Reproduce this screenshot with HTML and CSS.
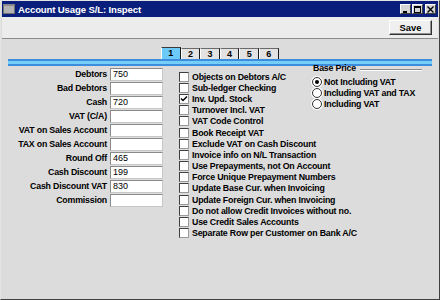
FILE: index.html
```html
<!DOCTYPE html>
<html lang="en">
  <head>
    <meta charset="UTF-8" />
    <title>Account Usage S/L: Inspect</title>
    <link rel="stylesheet" href="styles.css">
  </head>
  <body>
    <div class="window">
      <div class="titlebar">
        <span class="app-icon"></span>
        <span class="title">Account Usage S/L: Inspect</span>
        <div class="win-btns">
          <span class="wbtn">
            <svg width="9" height="7" viewBox="0 0 9 7"><rect x="2" y="5" width="4" height="2" fill="#000"/></svg>
          </span>
          <span class="wbtn">
            <svg width="9" height="7" viewBox="0 0 9 7"><rect x="1.5" y="0.5" width="6" height="6" fill="none" stroke="#000"/><rect x="1" y="0" width="7" height="2" fill="#000"/></svg>
          </span>
          <span class="wbtn close">
            <svg width="9" height="7" viewBox="0 0 9 7"><path d="M1.5 0.5 L7.5 6.5 M7.5 0.5 L1.5 6.5" stroke="#000" stroke-width="1.4"/></svg>
          </span>
        </div>
      </div>

      <div class="toolbar">
        <button class="save">Save</button>
      </div>

      <div class="content">
        <div class="tabs">
          <span class="tab active">1</span>
          <span class="tab">2</span>
          <span class="tab">3</span>
          <span class="tab">4</span>
          <span class="tab">5</span>
          <span class="tab">6</span>
        </div>
        <div class="tabbar"></div>

        <div class="form">
          <!-- account fields -->
          <div class="fields">
            <div class="field"><label>Debtors</label><span class="input">750</span></div>
            <div class="field"><label>Bad Debtors</label><span class="input"></span></div>
            <div class="field"><label>Cash</label><span class="input">720</span></div>
            <div class="field"><label>VAT (C/A)</label><span class="input"></span></div>
            <div class="field"><label>VAT on Sales Account</label><span class="input"></span></div>
            <div class="field"><label>TAX on Sales Account</label><span class="input"></span></div>
            <div class="field"><label>Round Off</label><span class="input">465</span></div>
            <div class="field"><label>Cash Discount</label><span class="input">199</span></div>
            <div class="field"><label>Cash Discount VAT</label><span class="input">830</span></div>
            <div class="field"><label>Commission</label><span class="input"></span></div>
          </div>

          <!-- options -->
          <div class="checks">
            <div class="check"><span class="box"></span>Objects on Debtors A/C</div>
            <div class="check"><span class="box"></span>Sub-ledger Checking</div>
            <div class="check"><span class="box">
              <svg width="8" height="8" viewBox="0 0 8 8"><path d="M1 3.5 L3 5.5 L7 1.5" fill="none" stroke="#000" stroke-width="1.5"/></svg>
            </span>Inv. Upd. Stock</div>
            <div class="check"><span class="box"></span>Turnover Incl. VAT</div>
            <div class="check"><span class="box"></span>VAT Code Control</div>
            <div class="check"><span class="box"></span>Book Receipt VAT</div>
            <div class="check"><span class="box"></span>Exclude VAT on Cash Discount</div>
            <div class="check"><span class="box"></span>Invoice info on N/L Transaction</div>
            <div class="check"><span class="box"></span>Use Prepayments, not On Account</div>
            <div class="check"><span class="box"></span>Force Unique Prepayment Numbers</div>
            <div class="check"><span class="box"></span>Update Base Cur. when Invoicing</div>
            <div class="check"><span class="box"></span>Update Foreign Cur. when Invoicing</div>
            <div class="check"><span class="box"></span>Do not allow Credit Invoices without no.</div>
            <div class="check"><span class="box"></span>Use Credit Sales Accounts</div>
            <div class="check"><span class="box"></span>Separate Row per Customer on Bank A/C</div>
          </div>

          <!-- base price group -->
          <div class="baseprice">
            <div class="legend"><span>Base Price</span><span class="rule"></span></div>
            <div class="radios">
              <div class="radio"><span class="dot on"></span>Not Including VAT</div>
              <div class="radio"><span class="dot"></span>Including VAT and TAX</div>
              <div class="radio"><span class="dot"></span>Including VAT</div>
            </div>
          </div>
        </div>
      </div>
    </div>
  </body>
</html>
```

FILE: styles.css
```css
body {
  margin: 0;
  font-family: "Liberation Sans", Arial, sans-serif;
}
.window {
  width: 440px;
  height: 300px;
  box-sizing: border-box;
  border: 1px solid;
  border-color: #e4e4e4 #404040 #404040 #e4e4e4;
  padding: 0 1px 1px 1px;
  background: #dcdcdc;
  display: flex;
  flex-direction: column;
}

/* title bar */
.titlebar {
  height: 16px;
  background: #0a1f7c;
  display: flex;
  align-items: center;
  padding-left: 1px;
}
.app-icon {
  width: 10px;
  height: 7px;
  background: #b4b4b4;
  border: 1px solid #707070;
  border-top: 2px solid #8a8a8a;
  margin-right: 3px;
}
.title {
  color: #fff;
  font-weight: bold;
  font-size: 9.6px;
  letter-spacing: -0.15px;
}
.win-btns {
  margin-left: auto;
  margin-right: 2px;
  display: flex;
  gap: 1px;
}
.wbtn {
  width: 11px;
  height: 10px;
  box-sizing: border-box;
  background: #d4d4d4;
  border: 1px solid;
  border-color: #fff #404040 #404040 #fff;
  display: flex;
  align-items: center;
  justify-content: center;
}
.wbtn.close {
  margin-left: 1px;
}

/* toolbar */
.toolbar {
  height: 21px;
  background: #ececec;
  border-bottom: 1px solid #8c8c8c;
  display: flex;
  justify-content: flex-end;
  align-items: center;
  padding-right: 6px;
}
.save {
  width: 43px;
  height: 15px;
  padding: 0;
  font-family: "Liberation Sans", Arial, sans-serif;
  font-weight: bold;
  font-size: 9.4px;
  color: #000;
  background: #efefef;
  border: 1px solid;
  border-color: #fff #303030 #303030 #fff;
  box-shadow: inset -1px -1px #909090;
}

/* tabs */
.content {
  flex: 1;
  background: #dcdcdc;
  padding-top: 8px;
}
.tabs {
  display: flex;
  align-items: flex-end;
  padding-left: 159px;
  height: 12px;
}
.tab {
  width: 19.6px;
  height: 11px;
  box-sizing: border-box;
  background: #e2e2e2;
  border-top: 1px solid #6a6a6a;
  border-left: 1px solid #fff;
  border-right: 1px solid #1a1a1a;
  font-size: 9px;
  font-weight: bold;
  text-align: center;
  line-height: 10px;
}
.tab.active {
  height: 12px;
  background: #6ccaf8;
  border-top-color: #3a3a3a;
}
.tabbar {
  margin: 0 6px;
  height: 7px;
  box-sizing: border-box;
  border-top: 2px solid #3d8ddc;
  border-bottom: 2px solid #3d8ddc;
  background: #74cef9;
}

/* form */
.form {
  display: flex;
  margin-top: 2px;
  font-size: 8.8px;
  letter-spacing: -0.2px;
  font-weight: bold;
  color: #000;
}
.fields {
  width: 164px;
  flex: none;
}
.field {
  height: 14px;
  display: flex;
  align-items: flex-start;
}
.field label {
  width: 108px;
  padding-right: 3px;
  box-sizing: border-box;
  text-align: right;
  line-height: 13px;
  white-space: nowrap;
}
.input {
  width: 53px;
  height: 13px;
  box-sizing: border-box;
  background: #fff;
  border: 1px solid;
  border-color: #8a8a8a #c8c8c8 #c8c8c8 #8a8a8a;
  font-weight: normal;
  font-size: 9px;
  letter-spacing: 0;
  line-height: 11px;
  padding-left: 2px;
}

.checks {
  width: 133px;
  flex: none;
  margin-left: 13px;
  padding-top: 3px;
}
.check {
  height: 11.2px;
  display: flex;
  align-items: center;
  gap: 3px;
  white-space: nowrap;
}
.box {
  width: 10px;
  height: 10px;
  flex: none;
  box-sizing: border-box;
  background: #fff;
  border: 1px solid;
  border-color: #404040 #9a9a9a #9a9a9a #404040;
  display: flex;
  align-items: center;
  justify-content: center;
}

.baseprice {
  width: 110px;
  margin-top: -5px;
}
.legend {
  height: 10px;
  display: flex;
  align-items: center;
  padding-left: 1px;
}
.rule {
  flex: 1;
  margin-left: 4px;
  margin-top: 4px;
  border-top: 1px solid #8c8c8c;
  border-bottom: 1px solid #fff;
}
.radios {
  margin-top: 3px;
}
.radio {
  height: 11px;
  display: flex;
  align-items: center;
  gap: 2px;
  white-space: nowrap;
}
.dot {
  width: 10px;
  height: 10px;
  flex: none;
  box-sizing: border-box;
  background: #fff;
  border: 1px solid #303030;
  border-radius: 50%;
  box-shadow: 0 0 0 1px #fff;
  position: relative;
}
.dot.on::after {
  content: "";
  position: absolute;
  left: 2px;
  top: 2px;
  width: 4px;
  height: 4px;
  border-radius: 50%;
  background: #000;
}
```
